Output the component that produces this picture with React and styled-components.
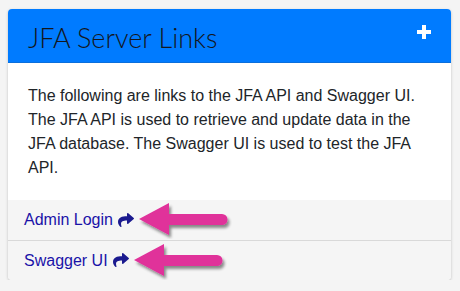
import React from "react";
import styled, { createGlobalStyle } from "styled-components";
import { FaShare } from "react-icons/fa";

const Global = createGlobalStyle`
  html, body { margin: 0; padding: 0; background: #f4f4f4; }
  body { padding: 9px 9px 0 8px; font-family: "Liberation Sans", Arial, sans-serif; }
`;

const Card = styled.div`
  width: 443px;
  background: #fff;
  border-radius: 4px;
  box-shadow: 0 1px 3px rgba(0,0,0,0.22);
  overflow: hidden;
`;

const Header = styled.div`
  background: #007bff;
  height: 54px;
  box-sizing: border-box;
  padding: 8px 20px 0 20px;
  display: flex;
  justify-content: space-between;
  align-items: flex-start;
  border-bottom: 1px solid #0a6fdc;
`;

const Title = styled.h3`
  margin: 0;
  padding-top: 5px;
  font-family: Lato, "Open Sans", sans-serif;
  font-weight: 300;
  font-size: 27px;
  line-height: 32px;
  color: #14171c;
`;

const PlusButton = styled.span`
  margin-top: 8px;
  width: 14px;
  height: 14px;
  display: flex;
  color: #fff;
`;

const Body = styled.div`
  padding: 21px 20px 20px 20px;
  font-size: 16px;
  line-height: 24px;
  color: #212529;
`;

const Paragraph = styled.p`
  margin: 0;
`;

const LinkList = styled.div`
  display: flex;
  flex-direction: column;
`;

const LinkRow = styled.div`
  background: #f5f5f5;
  height: ${(p) => p.$h}px;
  box-sizing: border-box;
  padding: 0 16px;
  display: flex;
  align-items: center;
  border-top: ${(p) => (p.$first ? "none" : "1px solid #d9d9d9")};
`;

const LinkText = styled.a`
  color: #1a12a8;
  text-decoration: none;
  font-size: 16px;
  line-height: 24px;
  display: flex;
  align-items: center;
  gap: 5px;
`;

const Icon = styled.span`
  display: flex;
  color: #1b1a8f;
  margin-top: -1px;
`;

const Pointer = styled.svg`
  margin-left: 4px;
  flex: none;
`;

function Arrow() {
  return (
    <Pointer width="96" height="38" viewBox="0 0 96 38">
      <defs>
        <filter id="sh" x="-10%" y="-20%" width="130%" height="150%">
          <feGaussianBlur in="SourceAlpha" stdDeviation="1.5" />
          <feOffset dx="2" dy="3" result="o" />
          <feComponentTransfer>
            <feFuncA type="linear" slope="0.45" />
          </feComponentTransfer>
          <feMerge>
            <feMergeNode />
            <feMergeNode in="SourceGraphic" />
          </feMerge>
        </filter>
      </defs>
      <g filter="url(#sh)">
        <path d="M1 18 L31 2 L31 13 L84 13 A5.5 5.5 0 0 1 84 24 L31 24 L31 34 Z" fill="#e0309a" />
      </g>
    </Pointer>
  );
}

function Plus() {
  return (
    <svg width="14" height="14" viewBox="0 0 14 14">
      <rect x="5" y="0" width="4" height="14" fill="#fff" />
      <rect x="0" y="5" width="14" height="4" fill="#fff" />
    </svg>
  );
}

export default function App() {
  return (
    <>
      <Global />
      <Card>
        <Header>
          <Title>JFA Server Links</Title>
          <PlusButton><Plus /></PlusButton>
        </Header>
        <Body>
          <Paragraph>
            The following are links to the JFA API and Swagger UI. The JFA API is used to retrieve and update data in the JFA database. The Swagger UI is used to test the JFA API.
          </Paragraph>
        </Body>
        <LinkList>
          <LinkRow $first $h={40}>
            <LinkText href="#">Admin Login <Icon><FaShare size={16} /></Icon></LinkText>
            <Arrow />
          </LinkRow>
          <LinkRow $h={40}>
            <LinkText href="#">Swagger UI <Icon><FaShare size={16} /></Icon></LinkText>
            <Arrow />
          </LinkRow>
        </LinkList>
      </Card>
    </>
  );
}
